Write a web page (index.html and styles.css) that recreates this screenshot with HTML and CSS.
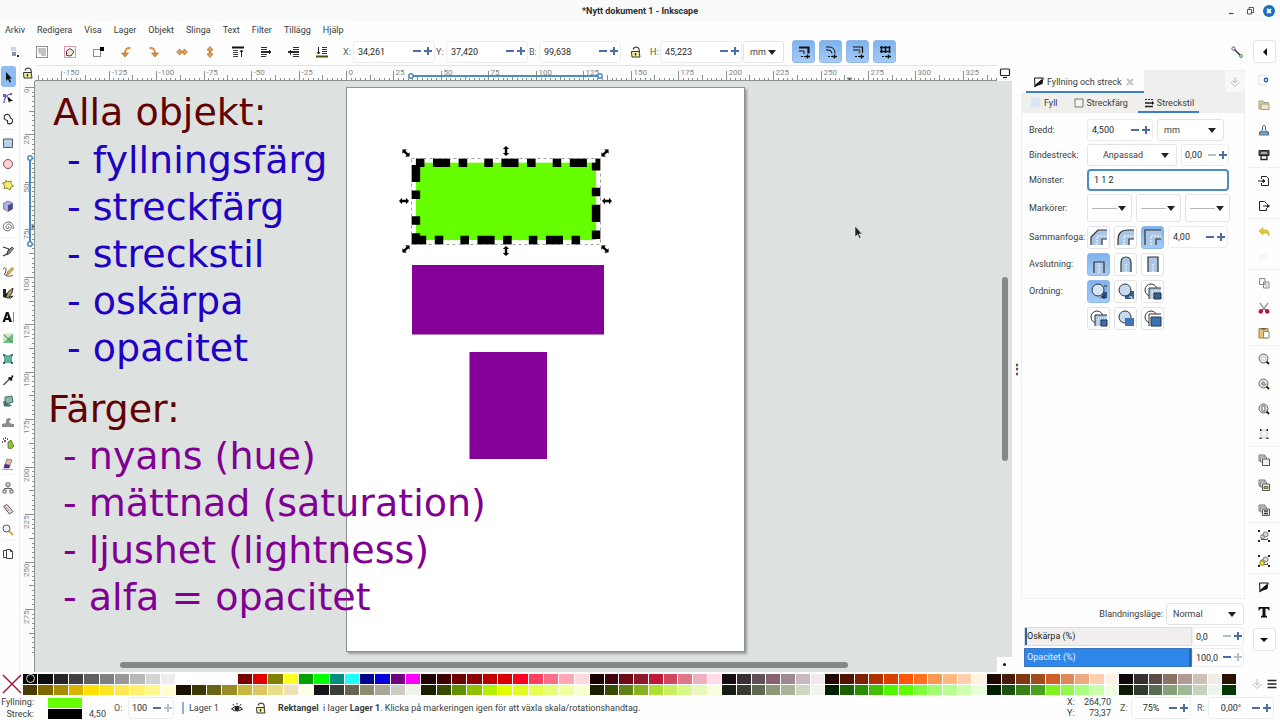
FILE: index.html
```html
<!DOCTYPE html>
<html lang="sv">
<head>
<meta charset="utf-8">
<title>*Nytt dokument 1 - Inkscape</title>
<link rel="stylesheet" href="styles.css">
</head>
<body>
<svg class="defs" aria-hidden="true">
  <defs>
    <symbol id="lock" viewBox="0 0 12 12"><path d="M3 3.500C4 .5 8 .5 9 3L9.500 6" fill="none" stroke="#444" stroke-width="1.200"/><path d="M1.500 5.500h7.500l1 5.500H2z" fill="#faf6a0" stroke="#333"/><path d="M5.500 7v2.500" stroke="#222" stroke-width="1.500"/></symbol>
    <symbol id="pen" viewBox="0 0 12 12"><path d="M1.500 2h9L2 10.500z" fill="#fff" stroke="#111"/><path d="M1 11.500l1.500-3L10.500 2 9.500 8 5 9.500z" fill="#111"/><path d="M9 3.500l2.500-2v2.500z" fill="#d8c840"/></symbol>
    <symbol id="dock" viewBox="0 0 12 12"><path d="M6 1v6M3.500 4.500L6 7l2.500-2.500M1.500 6L6 10.500 10.500 6" fill="none" stroke="#b8b8b8"/></symbol>
    <symbol id="pages" viewBox="0 0 12 12"><path d="M1.500 2.500h5v7h-5z" fill="#fff" stroke="#444"/><path d="M4.500 1.500h4l2 2v7h-6z" fill="#fff" stroke="#444"/><path d="M8.500 1.500v2h2" fill="none" stroke="#444"/></symbol>
    <symbol id="lens" viewBox="0 0 12 12"><circle cx="5.500" cy="5.500" r="4.500" fill="#e4e6e6" stroke="#666"/><path d="M8.500 8.500l2.500 2.500" stroke="#222" stroke-width="2"/></symbol>
    <symbol id="clones" viewBox="0 0 12 12"><path d="M1 1h6v6H1z" fill="#ddd" stroke="#777"/><path d="M2.500 3h6v5h-6z" fill="#ddd" stroke="#888"/><path d="M4.500 5h7v6.500h-7z" fill="#eee" stroke="#555"/></symbol>
    <symbol id="group" viewBox="0 0 12 12"><circle cx="7.500" cy="4.500" r="2.500" fill="#ddd" stroke="#777"/><path d="M3 5h3v4H3z" fill="#ddd" stroke="#777"/><path d="M0 0h2v2H0zM10 0h2v2h-2zM0 10h2v2H0zM10 10h2v2h-2z" fill="#222"/><path d="M3 9.500h6.500V8" fill="none" stroke="#555"/></symbol>
    <symbol id="arr" viewBox="-6 -6 12 12"><path d="M-5 0L-2-3.200v2H2v-2L5 0 2 3.200V1.200H-2v2z"/></symbol>
  </defs>
</svg>

<header class="titlebar">
  <h1>*Nytt dokument 1 - Inkscape</h1>
  <div class="window-buttons">
    <button aria-label="Minimera"><svg viewBox="0 0 12 12"><path d="M4 8.500h4.500" stroke="#444" stroke-width="1.200"/></svg></button>
    <button aria-label="Återställ"><svg viewBox="0 0 12 12"><path d="M3.500 4.500h4v4.500h-4zM5 4.500v-2h4.500V7.500H7.500" fill="none" stroke="#555"/></svg></button>
    <button aria-label="Stäng"><svg viewBox="0 0 12 12"><circle cx="6" cy="6" r="6" fill="#1b6fba"/><path d="M4 4l4 4M8 4L4 8" stroke="#fff" stroke-width="1.800"/></svg></button>
  </div>
</header>

<nav class="menubar">
  <button>Arkiv</button><button>Redigera</button><button>Visa</button><button>Lager</button><button>Objekt</button><button>Slinga</button><button>Text</button><button>Filter</button><button>Tillägg</button><button>Hjälp</button>
</nav>

<div class="toolbar">
  <div class="tool-icons">
    <button aria-label="Markera allt"><svg viewBox="0 0 12 12"><path d="M3 1h5v4H3z" fill="#ccd6e6"/><path d="M4 6h4v4H4z" fill="#8794aa"/><path d="M9 9h2v2H9z" fill="#333"/></svg></button>
    <button aria-label="Markera i alla lager"><svg viewBox="0 0 12 12"><path d="M.5.5h11v11H.5z" fill="none" stroke="#222" stroke-dasharray="1 1"/><path d="M2 3h8M2 5h8M3 7h7M5 9h5" stroke="#888" stroke-width="1.200"/></svg></button>
    <button aria-label="Avmarkera"><svg viewBox="0 0 12 12"><path d="M.5.5h11v11H.5z" fill="none" stroke="#c03060" stroke-dasharray="1 1"/><path d="M2.500 9.500V5L6 2.500l4 3-3 4.500z" fill="#eee6c4" stroke="#444"/></svg></button>
    <button aria-label="Rutmarkering"><svg viewBox="0 0 12 12"><path d="M1.500 3.500h7v7h-7z" fill="none" stroke="#222" stroke-dasharray="1 1"/><path d="M8 1h4v4H8z"/></svg></button>
    <button aria-label="Rotera moturs"><svg viewBox="0 0 12 12"><path d="M10.500 2C7 1.500 5 3.500 5 7" fill="none" stroke="#e09040" stroke-width="2"/><path d="M1.500 7h7L5 11z" fill="#e09040" stroke="#a86420" stroke-width=".6"/></svg></button>
    <button aria-label="Rotera medurs"><svg viewBox="0 0 12 12"><path d="M1.500 2C5 1.500 7 3.500 7 7" fill="none" stroke="#e09040" stroke-width="2"/><path d="M3.500 7h7L7 11z" fill="#e09040" stroke="#a86420" stroke-width=".6"/></svg></button>
    <button aria-label="Vänd vågrätt"><svg viewBox="0 0 12 12"><path d="M.5 6L4 3v2h4V3l3.500 3L8 9V7H4v2z" fill="#eba457" stroke="#a86420" stroke-width=".7"/></svg></button>
    <button aria-label="Vänd lodrätt"><svg viewBox="0 0 12 12"><path d="M6 .5L9 4H7v4h2l-3 3.500L3 8h2V4H3z" fill="#eba457" stroke="#a86420" stroke-width=".7"/></svg></button>
    <button aria-label="Höj överst"><svg viewBox="0 0 12 12"><path d="M0 1.500h12" stroke="#111" stroke-width="2"/><path d="M1 4.500h5M1 6.500h5M1 8.500h5M1 10.500h5" stroke="#444"/><path d="M9.500 11V4M8 6l1.500-2L11 6" fill="none" stroke="#222"/></svg></button>
    <button aria-label="Höj"><svg viewBox="0 0 12 12"><path d="M1 1.500h6M1 3.500h6M1 8.500h6M1 10.500h5" stroke="#333" stroke-width="1.200"/><path d="M1 6h10" stroke="#111" stroke-width="1.800"/><path d="M9.500 8V4" stroke="#222"/></svg></button>
    <button aria-label="Sänk"><svg viewBox="0 0 12 12"><path d="M5 1.500h6M5 3.500h6M5 8.500h6M5 10.500h6" stroke="#333" stroke-width="1.200"/><path d="M0 6h11" stroke="#111" stroke-width="1.800"/><path d="M2.500 4v5" stroke="#222"/></svg></button>
    <button aria-label="Sänk nederst"><svg viewBox="0 0 12 12"><path d="M0 10.500h12" stroke="#554c10" stroke-width="2"/><path d="M6 1.500h5M6 3.500h5M6 5.500h5M6 7.500h5" stroke="#333"/><path d="M2.500 1v7M1 6l1.500 2L4 6" fill="none" stroke="#222"/></svg></button>
  </div>
  <div class="field"><label for="fx">X:</label><div class="spin"><input id="fx" value="34,261"><button class="minus" aria-label="Minska"></button><button class="plus" aria-label="Öka"></button></div></div>
  <div class="field"><label for="fy">Y:</label><div class="spin"><input id="fy" value="37,420"><button class="minus" aria-label="Minska"></button><button class="plus" aria-label="Öka"></button></div></div>
  <div class="field"><label for="fw">B:</label><div class="spin"><input id="fw" value="99,638"><button class="minus" aria-label="Minska"></button><button class="plus" aria-label="Öka"></button></div></div>
  <button class="ratio" aria-label="Lås proportioner"><svg viewBox="0 0 12 12"><use href="#lock"/></svg></button>
  <div class="field"><label for="fh">H:</label><div class="spin"><input id="fh" value="45,223"><button class="minus" aria-label="Minska"></button><button class="plus" aria-label="Öka"></button></div></div>
  <div class="drop unit"><select aria-label="Enhet"><option>mm</option></select></div>
  <div class="toggles">
    <button class="tile on" aria-label="Skala streck"><svg viewBox="0 0 14 14"><path d="M2 2.500h9.500v6" fill="none" stroke="#111" stroke-width="2.200"/><path d="M2 6h5v3" fill="none" stroke="#111"/><path d="M4 11.500h4" stroke="#111" stroke-dasharray="2 1"/><path d="M8 11.500h5M10.500 9.500v4" stroke="#111" stroke-width="1.300"/></svg></button>
    <button class="tile on" aria-label="Skala hörnradie"><svg viewBox="0 0 14 14"><path d="M2 2h3q6 0 6 6.500M2 5h2q4 0 4 3.500" fill="none" stroke="#111"/><path d="M4 11.500h4" stroke="#111" stroke-dasharray="2 1"/><path d="M8 11.500h5M10.500 9.500v4" stroke="#111" stroke-width="1.300"/></svg></button>
    <button class="tile on" aria-label="Flytta toningar"><svg viewBox="0 0 14 14"><path d="M2 2h9.500v6" fill="none" stroke="#111" stroke-width="1.200"/><path d="M2 5h6.500v3.500" fill="none" stroke="#567" stroke-width="1.800"/><path d="M4 11.500h4" stroke="#111" stroke-dasharray="2 1"/><path d="M8 11.500h5M10.500 9.500v4" stroke="#111" stroke-width="1.300"/></svg></button>
    <button class="tile on" aria-label="Flytta mönster"><svg viewBox="0 0 14 14"><path d="M2 2.500h10.500M2 6.500h10.500M3.500 1v7M7.500 1v7M11.500 1v7" stroke="#111" stroke-width="1.500"/><path d="M4 11.500h4" stroke="#111" stroke-dasharray="2 1"/><path d="M8 11.500h5M10.500 9.500v4" stroke="#111" stroke-width="1.300"/></svg></button>
  </div>
  <div class="snap">
    <button class="plain" aria-label="Fästning"><svg viewBox="0 0 12 12"><path d="M3 3l7 7" stroke="#333" stroke-width="1.500"/><circle cx="2.500" cy="2.500" r="1.600" fill="#fff" stroke="#6040b0"/><circle cx="10" cy="10" r="1.400" fill="#fff" stroke="#309040"/></svg></button>
    <button class="tile" aria-label="Visa fästalternativ"><svg viewBox="0 0 14 14"><path d="M9 3v8L5 7z" fill="#111"/></svg></button>
  </div>
</div>

<main class="work">
  <div class="toolbox">
    <button class="on" aria-label="Markeringsverktyg"><svg viewBox="0 0 12 12"><path d="M4 1v9l2-2 1.500 3.500L9 11 7.500 7.500H10z" fill="#111"/></svg></button>
    <button aria-label="Nodverktyg"><svg viewBox="0 0 12 12"><path d="M2 11Q2 3 9 2" fill="none" stroke="#5040b0" stroke-width="1.200"/><path d="M1 2h3v3H1zM8 1h2v2H8z" fill="#6a5ac8"/><path d="M5 4l6 5-3 .3L7 11z" fill="#111"/></svg></button>
    <button aria-label="Formbyggare"><svg viewBox="0 0 12 12"><path d="M3 6.500a3 3 0 1 1 5-3l.5 1.500a3 3 0 1 1-3 5V7.500z" fill="#fff" stroke="#333" stroke-width="1.100"/></svg></button>
    <hr>
    <button aria-label="Rektangel"><svg viewBox="0 0 12 12"><path d="M1.500 2h9v8.500h-9z" fill="#b9cfe6" stroke="#556"/></svg></button>
    <button aria-label="Ellips"><svg viewBox="0 0 12 12"><circle cx="6" cy="6" r="4.500" fill="#f8d0d8" stroke="#a04858"/></svg></button>
    <button aria-label="Stjärna"><svg viewBox="0 0 12 12"><path d="M4 1l1.500 2L9 2v2.500L11.500 7 9 8l-1 3-3-2-3 .5.500-3L.5 4l3-.5z" fill="#f2ee70" stroke="#8a8630"/></svg></button>
    <button aria-label="3D-låda"><svg viewBox="0 0 12 12"><path d="M1.500 3L6 1l4.500 2v6L6 11.500 1.500 9z" fill="#b0b0e0" stroke="#556" stroke-width=".6"/><path d="M6 5.500v6L10.500 9V3z" fill="#4a4a90"/></svg></button>
    <button aria-label="Spiral"><svg viewBox="0 0 12 12"><path d="M6 6c1-1 2 1 0 1.500S3 5 5.500 3.500 10 5 9 7.500 4 11 2 8 2.500 1 6.500 1 12 5 11 8" fill="none" stroke="#666"/></svg></button>
    <hr>
    <button aria-label="Penna"><svg viewBox="0 0 12 12"><path d="M1 2l6 2-2 5-4 2" fill="none" stroke="#333" stroke-width="1.200"/><path d="M5 10l1-4 4-4 1.500 1.500L8 8z" fill="#7a9a80" stroke="#333" stroke-width=".8"/></svg></button>
    <button aria-label="Blyerts"><svg viewBox="0 0 12 12"><path d="M1 3q3-3 3 1T2 8q4 4 9 1" fill="none" stroke="#555"/><path d="M4.500 9.500l1-3.500L10 1.500l1.500 1.500L7 8z" fill="#f0bc48" stroke="#765a20" stroke-width=".7"/></svg></button>
    <button aria-label="Kalligrafi"><svg viewBox="0 0 12 12"><path d="M1 2h3v4l2 1-2 4-3-1z" fill="#222"/><path d="M4 10l2-5 5-4-1 5-3 4 4-1-2 2H5z" fill="#b8a060" stroke="#111" stroke-width=".8"/></svg></button>
    <hr>
    <button aria-label="Text"><svg viewBox="0 0 12 12"><path d="M.5 11L4 1h2.500L10 11H7.200L6.600 9H3.500L3 11zM4.200 7h1.900L5.200 3.500z" fill="#111" fill-rule="evenodd"/><path d="M11.500 1v10" stroke="#888"/></svg></button>
    <button aria-label="Toning"><svg viewBox="0 0 12 12"><path d="M1 1.500h10v9.500H1z" fill="#c4ecc8"/><path d="M6 6l5-4.500V11H1z" fill="#72bd80"/><path d="M2 3l8 7" stroke="#4c7054"/></svg></button>
    <button aria-label="Nät"><svg viewBox="0 0 12 12"><path d="M2 2q4 2 8 0-2 4 0 8-4-2-8 0 2-4 0-8z" fill="#62b49c" stroke="#488"/><path d="M1 1h2v2H1zM9 1h2v2H9zM1 9h2v2H1zM9 9h2v2H9z" fill="#466"/></svg></button>
    <button aria-label="Pipett"><svg viewBox="0 0 12 12"><path d="M1.500 11l6-6" stroke="#555" stroke-width="1.500"/><path d="M6 4l1-1 2 .5L10 1l1.500 1L10 5l.5 1-1.500 1z" fill="#111"/></svg></button>
    <button aria-label="Färghink"><svg viewBox="0 0 12 12"><path d="M3 2l7-1 1 6-5 2-3-3z" fill="#8fb4ac" stroke="#355" stroke-width=".8"/><path d="M1 6q3 0 4 3l5 1-2 1.500H2z" fill="#3f6f62"/></svg></button>
    <button aria-label="Justera"><svg viewBox="0 0 12 12"><path d="M0 11V8l4-1q-1-5 4-5l1 2-2 1q0 3 5 3v3z" fill="#8a8c8c"/></svg></button>
    <button aria-label="Sprej"><svg viewBox="0 0 12 12"><path d="M6 5l3-2 3 6-3 3-3-1z" fill="#8ec040" stroke="#4a6a20" stroke-width=".7"/><path d="M1 2h1M3 1h1M2 4h2M5 2h1M0 5h1" stroke="#333" stroke-width="1.500"/></svg></button>
    <button aria-label="Suddgummi"><svg viewBox="0 0 12 12"><path d="M5 1l5 1-3 8H2z" fill="#e8b8a4" stroke="#666" stroke-width=".7"/><path d="M3 6l5 1-1 3H1.500z" fill="#4434a0"/><path d="M0 11.500h11" stroke="#aaa"/></svg></button>
    <hr>
    <button aria-label="Koppling"><svg viewBox="0 0 12 12"><path d="M4 1h4v3H4zM1 8h3v3H1zM8 8h3v3H8zM6 4v2.500M2.500 8V6.500h7V8" fill="#eee" stroke="#666"/></svg></button>
    <button aria-label="Mät"><svg viewBox="0 0 12 12"><path d="M1.500 3.500L5 1.500l6 7-3.500 2.500z" fill="#f2dcd8" stroke="#555"/><path d="M4 4l3.500 4" stroke="#b88"/></svg></button>
    <button aria-label="Zoom"><svg viewBox="0 0 12 12"><path d="M7 7l4 4" stroke="#d8b030" stroke-width="2.200"/><circle cx="4.500" cy="4.500" r="3.500" fill="#f0f4f4" stroke="#555"/></svg></button>
    <hr>
    <button aria-label="Sidor"><svg viewBox="0 0 12 12"><use href="#pages"/></svg></button>
  </div>

  <section class="editor" aria-label="Rityta">
    <button class="guide-lock" aria-label="Lås stödlinjer"><svg viewBox="0 0 12 12"><use href="#lock"/></svg></button>
    <svg class="ruler-x" id="ruler-x"></svg>
    <button class="screen" aria-label="Färghanterad vy"><svg viewBox="0 0 12 12"><rect x="1.500" y="2" width="9" height="6.500" rx="1" fill="#fff" stroke="#222" stroke-width="1.200"/><path d="M4 10.500h4" stroke="#222" stroke-width="1.200"/></svg></button>
    <svg class="ruler-y" id="ruler-y"></svg>
    <svg class="canvas">
      <g transform="translate(-35 -81)">
        <rect class="shadow" x="348" y="89" width="399" height="565"/>
        <rect class="page" x="346.500" y="87.500" width="398" height="564"/>
        <rect x="412" y="265" width="192" height="69.500" fill="#840096"/>
        <rect x="469.500" y="352" width="77.500" height="107" fill="#840096"/>
        <rect class="selected" x="415.900" y="162.700" width="180.200" height="77.400"/>
        <rect class="bbox" x="411.500" y="158.500" width="189" height="86"/>
        <g class="handles">
          <use href="#arr" width="12" height="12" transform="translate(406 153) rotate(45) translate(-6 -6)"/>
          <use href="#arr" width="12" height="12" transform="translate(605 153) rotate(-45) translate(-6 -6)"/>
          <use href="#arr" width="12" height="12" transform="translate(406 249) rotate(-45) translate(-6 -6)"/>
          <use href="#arr" width="12" height="12" transform="translate(605 249) rotate(45) translate(-6 -6)"/>
          <use href="#arr" width="12" height="12" transform="translate(506 151) rotate(90) translate(-6 -6)"/>
          <use href="#arr" width="12" height="12" transform="translate(506 251) rotate(90) translate(-6 -6)"/>
          <use href="#arr" width="12" height="12" transform="translate(404 201) translate(-6 -6)"/>
          <use href="#arr" width="12" height="12" transform="translate(607 201) translate(-6 -6)"/>
        </g>
        <g class="note head"><text x="53" y="125">Alla objekt:</text><text x="48" y="422">Färger:</text></g>
        <g class="note blue">
          <text x="67" y="173">- fyllningsfärg</text><text x="67" y="220">- streckfärg</text><text x="67" y="267">- streckstil</text><text x="67" y="314">- oskärpa</text><text x="67" y="361">- opacitet</text>
        </g>
        <g class="note violet">
          <text x="63" y="469">- nyans (hue)</text><text x="63" y="516">- mättnad (saturation)</text><text x="63" y="563">- ljushet (lightness)</text><text x="63" y="610">- alfa = opacitet</text>
        </g>
        <path d="M855 226v11l2.500-2.500 2 4 1.500-1-2-3.500h3.200z" fill="#222" stroke="#eee" stroke-width=".6"/>
      </g>
    </svg>
    <div class="scroll-y"><i></i></div>
    <div class="scroll-x"><i></i></div>
    <div class="corner"></div>
  </section>

  <div class="grip" aria-hidden="true">⋮</div>

  <aside class="dock">
    <div class="dock-tabs">
      <div class="dock-tab"><svg viewBox="0 0 12 12"><use href="#pen"/></svg><span>Fyllning och streck</span><button aria-label="Stäng flik"><svg viewBox="0 0 12 12"><path d="M3 3l6 6M9 3L3 9" stroke="#c4c4c4" stroke-width="2"/></svg></button></div>
      <button class="dock-menu" aria-label="Dockmeny"><svg viewBox="0 0 12 12"><use href="#dock"/></svg></button>
    </div>
    <div class="sub-tabs">
      <button><svg viewBox="0 0 12 12"><path d="M1 1h9v9H1z" fill="#dbe6f4"/></svg>Fyll</button>
      <button><svg viewBox="0 0 12 12"><path d="M2 2h8v8H2z" fill="#f4f4f4" stroke="#777"/></svg>Streckfärg</button>
      <button class="active"><svg viewBox="0 0 12 12"><path d="M2 2.500h8" stroke="#222" stroke-dasharray="2 1"/><path d="M2 6h8M2 9.500h8" stroke="#222" stroke-width="1.300"/><path d="M9 4l2 2-2 2z"/></svg>Streckstil</button>
    </div>
    <form class="style-form">
      <div class="row"><label for="bredd">Bredd:</label><div class="spin w66"><input id="bredd" value="4,500"><button type="button" class="minus" aria-label="Minska"></button><button type="button" class="plus" aria-label="Öka"></button></div><div class="drop w67"><select aria-label="Breddenhet"><option>mm</option></select></div></div>
      <div class="row"><label for="dash">Bindestreck:</label><div class="drop w90 mid"><select id="dash"><option>Anpassad</option></select></div><div class="spin w48 tight"><input aria-label="Förskjutning" value="0,00"><button type="button" class="minus off" aria-label="Minska"></button><button type="button" class="plus" aria-label="Öka"></button></div></div>
      <div class="row"><label for="monster">Mönster:</label><input class="pattern" id="monster" value="1 1 2"></div>
      <div class="row markers"><span>Markörer:</span><div class="drop line"><select aria-label="Startmarkör"><option></option></select></div><div class="drop line"><select aria-label="Mittmarkör"><option></option></select></div><div class="drop line"><select aria-label="Slutmarkör"><option></option></select></div></div>
      <div class="row tiles"><span>Sammanfoga:</span>
        <button type="button" class="tile" aria-label="Fasad"><svg viewBox="0 0 18 18"><path d="M1 17V9l7-7h9v9h-5v6z" fill="#a9c6e4"/><path d="M1 17V9l7-7h9M17 11h-5v6" fill="none" stroke="#333" stroke-width="1.200"/><path d="M7 17V8h10" fill="none" stroke="#fff" stroke-dasharray="2 1"/></svg></button>
        <button type="button" class="tile" aria-label="Rund"><svg viewBox="0 0 18 18"><path d="M1 17v-5Q1 2 11 2h6v9h-5v6z" fill="#a9c6e4"/><path d="M1 17v-5Q1 2 11 2h6M17 11h-5v6" fill="none" stroke="#333" stroke-width="1.200"/><path d="M7 17V8h10" fill="none" stroke="#fff" stroke-dasharray="2 1"/></svg></button>
        <button type="button" class="tile on" aria-label="Spetsig"><svg viewBox="0 0 18 18"><path d="M1 17V2h16v9h-5v6z" fill="#a9c6e4"/><path d="M1 17V2h16M17 11h-5v6" fill="none" stroke="#333" stroke-width="1.200"/><path d="M7 17V8h10" fill="none" stroke="#fff" stroke-dasharray="2 1"/></svg></button>
        <div class="spin w60"><input aria-label="Spetsgräns" value="4,00"><button type="button" class="minus" aria-label="Minska"></button><button type="button" class="plus" aria-label="Öka"></button></div></div>
      <div class="row tiles"><span>Avslutning:</span>
        <button type="button" class="tile on" aria-label="Trubbig"><svg viewBox="0 0 18 18"><path d="M4 18V7h10v11" fill="#a9c6e4" stroke="#333" stroke-width="1.200"/><path d="M9 18V8" stroke="#fff" stroke-dasharray="2 1"/></svg></button>
        <button type="button" class="tile" aria-label="Rundad"><svg viewBox="0 0 18 18"><path d="M4 17V8q0-6 5-6t5 6v9" fill="#a9c6e4" stroke="#333" stroke-width="1.200"/><path d="M9 17V8" stroke="#fff" stroke-dasharray="2 1"/></svg></button>
        <button type="button" class="tile" aria-label="Fyrkantig"><svg viewBox="0 0 18 18"><path d="M4 17V2h10v15" fill="#a9c6e4" stroke="#333" stroke-width="1.200"/><path d="M9 17V8" stroke="#fff" stroke-dasharray="2 1"/></svg></button></div>
      <div class="row tiles"><span>Ordning:</span>
        <button type="button" class="tile on" aria-label="Ordning 1"><svg viewBox="0 0 18 18"><path d="M12 5h5v12H9v-3" fill="#88b0da"/><path d="M12 10h5v6h-5z" fill="#27507e"/><circle cx="8" cy="8" r="6" fill="#d5e5f6" stroke="#333"/><path d="M11 15h3v2M14 4h3" stroke="#222" fill="none"/></svg></button>
        <button type="button" class="tile" aria-label="Ordning 2"><svg viewBox="0 0 18 18"><path d="M8 9h9v8H8z" fill="#33618f"/><circle cx="8" cy="8" r="6" fill="#c5daf0" stroke="#333"/><path d="M12 15h3v2" stroke="#fff" fill="none"/></svg></button>
        <button type="button" class="tile" aria-label="Ordning 3"><svg viewBox="0 0 18 18"><circle cx="7" cy="8" r="6" fill="#fff" stroke="#333"/><path d="M5 17V6h12v11z" fill="#a9c6e4"/><path d="M5 17V6h12" fill="none" stroke="#333"/><path d="M10 11h7v6h-7z" fill="#33618f" stroke="#234"/><path d="M8 17V9h9" fill="none" stroke="#fff" stroke-dasharray="1 1"/></svg></button></div>
      <div class="row tiles"><span></span>
        <button type="button" class="tile" aria-label="Ordning 4"><svg viewBox="0 0 18 18"><circle cx="7" cy="8" r="6" fill="#fff" stroke="#333"/><path d="M5 17V6h12v11z" fill="#a9c6e4"/><path d="M5 17V6h12" fill="none" stroke="#333"/><path d="M11 11h6v6h-6z" fill="#3a6fac" stroke="#234"/><path d="M8 17V9h9" fill="none" stroke="#fff" stroke-dasharray="1 1"/></svg></button>
        <button type="button" class="tile" aria-label="Ordning 5"><svg viewBox="0 0 18 18"><circle cx="8" cy="8" r="6" fill="#c5daf0" stroke="#333"/><path d="M8 9h9v8H8z" fill="#3f74b4"/></svg></button>
        <button type="button" class="tile" aria-label="Ordning 6"><svg viewBox="0 0 18 18"><circle cx="7" cy="8" r="6" fill="#fff" stroke="#333"/><path d="M5 17V5h12" fill="#fff" stroke="#333"/><path d="M7 8h10v9H7z" fill="#3f74b4" stroke="#234"/></svg></button></div>
    </form>
    <div class="dock-foot">
      <div class="blend"><label for="blend">Blandningsläge:</label><div class="drop w78"><select id="blend"><option>Normal</option></select></div></div>
      <div class="scale"><div class="bar"><label for="blur">Oskärpa (%)</label><input id="blur" type="range" min="0" max="100" value="0"></div><div class="spin tight"><input aria-label="Oskärpa, värde" value="0,0"><button class="minus off" aria-label="Minska"></button><button class="plus" aria-label="Öka"></button></div></div>
      <div class="scale full"><div class="bar"><label for="opac">Opacitet (%)</label><input id="opac" type="range" min="0" max="100" value="100"></div><div class="spin tight"><input aria-label="Opacitet, värde" value="100,0"><button class="minus" aria-label="Minska"></button><button class="plus off" aria-label="Öka"></button></div></div>
    </div>
  </aside>

  <div class="commands">
    <button aria-label="Nytt"><svg viewBox="0 0 12 12"><path d="M1 1h7v10H1z" fill="#fafafa" stroke="#e4e4e4"/><circle cx="8" cy="6" r="1.700" fill="#fff" stroke="#2a62a8" stroke-width="1.400"/></svg></button>
    <button aria-label="Öppna"><svg viewBox="0 0 12 12"><path d="M1 2h4l1 1.500h4.500V10H1z" fill="#d9cfae" stroke="#a89e80"/><path d="M3 5h8v5.500H3z" fill="#eee6cc" stroke="#a89e80"/></svg></button>
    <button aria-label="Spara"><svg viewBox="0 0 12 12"><path d="M4.500 6V2.500L6 1l1.500 1.500V6l2 2h-7z" fill="#e6eef8" stroke="#4a76b0"/><path d="M1.500 8h9v3h-9z" fill="#8aaad4" stroke="#567"/></svg></button>
    <button aria-label="Skriv ut"><svg viewBox="0 0 12 12"><path d="M1 1.500h10v5H1z" fill="#555" stroke="#222"/><path d="M3 4h6" stroke="#fff"/><path d="M3 6.500h6v4H3z" fill="#fff" stroke="#222" stroke-width="1.300"/></svg></button>
    <hr>
    <button aria-label="Importera"><svg viewBox="0 0 12 12"><path d="M3.500 4V1.500h5l2 2v7h-7V8" fill="#fff" stroke="#222"/><path d="M0 6h6M5 4.500L7 6 5 7.500z" stroke="#222" fill="#222"/></svg></button>
    <button aria-label="Exportera"><svg viewBox="0 0 12 12"><path d="M8.500 4V3.500l-2-2h-5v9h7V8" fill="#fff" stroke="#222"/><path d="M5 6h5M9.500 4.500l2 1.500-2 1.500z" stroke="#222" fill="#222"/></svg></button>
    <hr>
    <button aria-label="Ångra"><svg viewBox="0 0 12 12"><path d="M1 5l4-3.500V4h3q3.500 0 3 6-1-3-3-3H5v2z" fill="#dcc838" stroke="#b4a030" stroke-width=".5"/></svg></button>
    <button class="dim" aria-label="Gör om"><svg viewBox="0 0 12 12"><path d="M11 5L7 1.500V4H4Q.5 4 1 10q1-3 3-3h3v2z" fill="#f4f4f4" stroke="#ddd" stroke-width=".5"/></svg></button>
    <hr>
    <button aria-label="Kopiera"><svg viewBox="0 0 12 12"><path d="M1.500 1.500h5.500v6H1.500zM5.500 5h5.500v6H5.500z" fill="#fafafa" stroke="#888"/><path d="M7 7h2.500M7 9h2.500" stroke="#aaa"/></svg></button>
    <button aria-label="Klipp ut"><svg viewBox="0 0 12 12"><path d="M2 1l5 7M10 1L5 8" stroke="#999" stroke-width="1.300"/><path d="M1 7.500l4-.5v3l-2 2-2.500-1.500zM11 7.500L7 7v3l2 2 2.500-1.500z" fill="#b8143c"/></svg></button>
    <button aria-label="Klistra in"><svg viewBox="0 0 12 12"><path d="M1 1.500h9V11H1z" fill="#e8c47c" stroke="#a08040"/><path d="M3.500 1h4v2h-4z" fill="#666"/><path d="M5.500 4.500H11V11H5.500z" fill="#fff" stroke="#888"/></svg></button>
    <hr>
    <button aria-label="Zooma markering"><svg viewBox="0 0 12 12"><use href="#lens"/><path d="M3.500 4h4v3h-4z" fill="#fff" stroke="#aaa" stroke-width=".5"/></svg></button>
    <button aria-label="Zooma teckning"><svg viewBox="0 0 12 12"><use href="#lens"/><path d="M3.500 6L5 3.500l3 3-2 1z" fill="#b8cc80" stroke="#555" stroke-width=".7"/></svg></button>
    <button aria-label="Zooma sida"><svg viewBox="0 0 12 12"><use href="#lens"/><path d="M4 3h3v5H4z" fill="#fff" stroke="#444" stroke-width=".8"/></svg></button>
    <button aria-label="Centrera sida"><svg viewBox="0 0 12 12"><path d="M3 2h6v8H3z" fill="#f4f4f4" stroke="#ccc"/><path d="M2 1h1.500v2H2zM8.500 1H10v2H8.500zM1.500 9.500h2V11h-2zM8.500 9.500h2V11h-2z" fill="#333"/></svg></button>
    <hr>
    <button aria-label="Duplicera"><svg viewBox="0 0 12 12"><use href="#clones"/></svg></button>
    <button aria-label="Klona"><svg viewBox="0 0 12 12"><use href="#clones"/><path d="M6 7.500h4v2H6z" fill="#c8a820" stroke="#332" stroke-width=".6"/></svg></button>
    <button aria-label="Avlänka klon"><svg viewBox="0 0 12 12"><use href="#clones"/><path d="M6 7h4M6 9.500h4" stroke="#333" stroke-width="1.300"/></svg></button>
    <hr>
    <button aria-label="Gruppera"><svg viewBox="0 0 12 12"><use href="#group"/></svg></button>
    <button aria-label="Avgruppera"><svg viewBox="0 0 12 12"><use href="#group"/><path d="M2 6h4v4H2z" fill="#f4e048" stroke="#a08c20"/></svg></button>
    <hr>
    <button aria-label="Fyllning och streck"><svg viewBox="0 0 12 12"><use href="#pen"/></svg></button>
    <button aria-label="Text och typsnitt"><svg viewBox="0 0 12 12"><path d="M.5 1h11v3.500h-1Q10.500 2.500 7.500 2.500v7l1.500.5v1.500H3V10l1.500-.5v-7Q1.500 2.500 1.500 4.500h-1z" fill="#111"/></svg></button>
    <button class="tile more" aria-label="Fler kommandon"><svg viewBox="0 0 14 14"><path d="M3 5h8L7 9z" fill="#111"/></svg></button>
  </div>
</main>

<div class="palette">
  <button class="no-color" aria-label="Ingen färg"><svg viewBox="0 0 20 20"><path d="M1 1l18 18M19 1L1 19" stroke="#a01848" stroke-width="1.500"/></svg></button>
  <div class="swatches" id="swatches"></div>
  <div class="palette-menu"><button aria-label="Palettläge"><svg viewBox="0 0 12 12"><use href="#dock"/></svg></button><button aria-label="Palettmeny"><svg viewBox="0 0 12 12"><path d="M1.500 2.500h9M1.500 6h9M1.500 9.500h9" stroke="#222" stroke-width="1.300"/></svg></button></div>
</div>

<footer class="status">
  <div class="paint-labels"><span>Fyllning:</span><span>Streck:</span></div>
  <div class="paint"><i class="fill"></i><i class="stroke"></i></div>
  <span class="stroke-width">4,50</span>
  <div class="field"><label for="so">O:</label><div class="spin w46 tight"><input id="so" value="100"><button class="minus" aria-label="Minska"></button><button class="plus off" aria-label="Öka"></button></div></div>
  <button class="layer">Lager 1</button>
  <button class="plain" aria-label="Visa lager"><svg viewBox="0 0 12 12"><path d="M.5 7Q6 1.500 11.500 7 6 11 .5 7z" fill="#ddd" stroke="#222"/><circle cx="6" cy="6.500" r="2.300" fill="#222"/><path d="M3 3.500L2 2M6 2.500V1M9 3.500L10 2" stroke="#222"/></svg></button>
  <button class="plain" aria-label="Lås lager"><svg viewBox="0 0 12 12"><use href="#lock"/></svg></button>
  <p class="hint"><b>Rektangel</b> &nbsp;i lager <b>Lager 1</b>. Klicka på markeringen igen för att växla skala/rotationshandtag.</p>
  <dl class="coords"><dt>X:</dt><dd>264,70</dd><dt>Y:</dt><dd>73,37</dd></dl>
  <div class="field"><label for="sz">Z:</label><div class="spin w60 center"><input id="sz" value="75%"><button class="minus" aria-label="Minska"></button><button class="plus" aria-label="Öka"></button></div></div>
  <div class="field"><label for="sr">R:</label><div class="spin w66 center"><input id="sr" value="0,00°"><button class="minus" aria-label="Minska"></button><button class="plus" aria-label="Öka"></button></div></div>
</footer>
<script src="script.js"></script>
</body>
</html>
```
FILE: styles.css
```css
* { box-sizing: border-box; }
html, body { height: 100%; }
body {
  margin: 0;
  display: grid;
  grid-template-rows: 22px 16px 27px minmax(0, 1fr) 24px 24px;
  grid-template-columns: minmax(0, 1fr);
  background: #fdfefd;
  color: #3a3d3e;
  font: 9px/12px Roboto, "Open Sans", sans-serif;
  overflow: hidden;
}
button, input, select { font: inherit; color: inherit; }
button { border: 0; padding: 0; background: none; display: flex; align-items: center; justify-content: center; }
input, select { border: 0; background: none; padding: 0; min-width: 0; outline: 0; }
svg { display: block; flex: none; }
button svg { width: 12px; height: 12px; }
.defs { position: absolute; width: 0; height: 0; }

.titlebar { display: grid; grid-template-columns: 1fr auto 1fr; align-items: center; background: #f8fbfa; }
.titlebar h1 { grid-column: 2; margin: 0; font-size: 9px; font-weight: 700; color: #2c2f30; }
.window-buttons { display: flex; justify-content: flex-end; gap: 7px; padding-right: 5px; }

.menubar { display: flex; align-items: center; gap: 12px; padding-left: 5px; }

.toolbar { display: flex; align-items: center; padding-right: 4px; }
.tool-icons { display: flex; padding-right: 7px; }
.tool-icons button { width: 28px; height: 22px; }
.field { display: flex; align-items: center; gap: 3px; color: #555; }
.toolbar .field { width: 93px; gap: 1px; }
.toolbar .field .spin { width: 82px; }
.toolbar .field label { width: 9px; white-space: nowrap; }
.ratio { width: 28px; }
.unit { width: 41px; }
.toggles { display: flex; gap: 4px; margin-left: 8px; }
.snap { display: flex; gap: 10px; margin-left: auto; }

.spin {
  display: flex; align-items: center; gap: 2px;
  height: 22px; padding: 0 2px 0 4px;
  border: 1px solid #eceeee; border-radius: 3px; background: #fff; color: #26292a;
}
.spin input { flex: 1; width: 10px; }
.spin.center input { text-align: center; }
.spin button { width: 9px; height: 15px; position: relative; flex: none; }
.minus::before, .plus::before, .plus::after { content: ""; position: absolute; background: #4c6ea2; }
.minus::before, .plus::before { left: 1px; top: 6px; width: 8px; height: 2px; }
.plus::after { left: 4px; top: 3px; width: 2px; height: 8px; }
.off::before, .off::after { background: #b4c0cc; }
.spin.tight { padding: 0 1px 0 3px; }

.drop { position: relative; height: 22px; border: 1px solid #e2e4e4; border-radius: 3px; background: #fff; }
.drop select { appearance: none; width: 100%; height: 100%; padding: 0 6px; }
.drop::after {
  content: ""; position: absolute; right: 7px; top: 50%; margin-top: -2px;
  border: 4px solid transparent; border-top: 5px solid #222; border-bottom: 0; pointer-events: none;
}
.mid select { padding-left: 15px; }
.tile { width: 23px; height: 23px; border: 1px solid #e2e4e4; border-radius: 3px; background: #fff; flex: none; }
.tile svg { width: 14px; height: 14px; }
.tile.on { background: linear-gradient(#7fb2ee, #a4cbf8); border-color: #8fb8ea; }
.w46 { width: 46px; } .w48 { width: 48px; } .w60 { width: 60px; } .w66 { width: 66px; }
.w67 { width: 67px; } .w78 { width: 78px; } .w90 { width: 90px; }

.work { display: grid; grid-template-columns: 20px minmax(0, 1fr) 9px 224px 35px; min-height: 0; }
.toolbox { display: flex; flex-direction: column; align-items: center; padding: 1px 3px 0 0; border-right: 1px solid #edf0f0; }
.toolbox button { width: 15px; height: 21px; flex: none; }
.toolbox .on { background: #8fbdf2; border-radius: 3px; }
.toolbox hr, .commands hr { width: 100%; margin: 0; border: 0; flex: none; }
.toolbox hr { height: 3px; border-top: 1px solid #f4f6f6; }

.editor { display: grid; grid-template-columns: 15px minmax(0, 1fr) 15px; grid-template-rows: 16px minmax(0, 1fr) 15px; background: #dde1e0; min-height: 0; }
.guide-lock, .ruler-x, .screen, .ruler-y { background: #fbfcfb; }
.ruler-x, .ruler-y, .canvas { width: 100%; height: 100%; overflow: hidden; }
.ruler-y { grid-row: 2 / 4; }
.ruler-x { border-top: 1px solid #e2e4e4; }
.ruler text { font-size: 8px; fill: #85888a; }
.ruler path { stroke: #8c9090; fill: none; }
.ruler .extent { stroke: #4a8cc4; stroke-width: 2; }
.ruler circle { fill: #fff; stroke: #4a8cc4; stroke-width: 1.500; }
.shadow { fill: #000; opacity: .3; filter: blur(1px); }
.page { fill: #fff; stroke: #8c9090; }
.selected { fill: #6f0; stroke: #000; stroke-width: 8.550; stroke-dasharray: 8.550 8.550 17.100 8.550 8.550 17.100; }
.bbox { fill: none; stroke: #a0a0a0; stroke-dasharray: 3 3; }
.handles { fill: #000; }
.note { font: 38px "DejaVu Sans", sans-serif; }
.head { fill: #600000; } .blue { fill: #2000c4; } .violet { fill: #800094; }
.scroll-y { display: flex; justify-content: center; padding-top: 196px; }
.scroll-y i { width: 6px; height: 184px; border-radius: 3px; background: #858888; }
.scroll-x { grid-column: 2; display: flex; align-items: center; padding-left: 85px; }
.scroll-x i { width: 83%; height: 6px; border-radius: 3px; background: #858888; }
.corner { display: flex; align-items: center; justify-content: center; background: #fdfefd; }
.corner::before { content: ""; width: 3px; height: 3px; border-radius: 50%; background: #111; }
.grip { display: flex; align-items: center; justify-content: center; font: 700 12px "Noto Sans", sans-serif; color: #333; }

.dock { display: flex; flex-direction: column; padding-top: 5px; min-width: 0; }
.dock-tabs { display: flex; height: 23px; background: #eeeeec; }
.dock-tab { display: flex; align-items: center; gap: 2px; padding: 0 8px 0 12px; background: linear-gradient(#3a80c4, #3a80c4) 5px 100% / 100% 2px no-repeat #fdfefd; }
.dock-tab svg { width: 12px; height: 12px; }
.dock-menu { width: 20px; margin: 1px 0 1px auto; background: #f8f8f7; border-radius: 3px; }
.sub-tabs { display: flex; height: 20px; padding-left: 4px; gap: 5px; background: #efefed; }
.sub-tabs button { gap: 2px; padding: 0 5px; }
.sub-tabs .active { border-bottom: 2px solid #3a80c4; padding-top: 2px; }
.style-form { flex: 1; display: flex; flex-direction: column; gap: 3px; padding: 6px 0 0 7px; border: 1px solid #eef0f0; border-top: 0; min-height: 0; }
.row { display: flex; align-items: center; gap: 4px; height: 22px; flex: none; }
.row > label, .row > span:first-child { width: 54px; flex: none; white-space: nowrap; }
.pattern { width: 142px; height: 22px; padding: 0 5px; border: 2px solid #4a8cc8; border-radius: 4px; background: #fff; color: #222; }
.row.markers { height: 28px; }
.line { width: 45px; height: 28px; }
.line::before { content: ""; position: absolute; left: 4px; right: 14px; top: 50%; height: 1px; background: #b8baba; }
.line::after { right: 5px; }
.row.tiles { height: 24px; }
.row.tiles svg { width: 18px; height: 18px; }
.dock-foot { padding: 4px 1px 5px 3px; display: flex; flex-direction: column; gap: 2px; }
.blend { display: flex; align-items: center; justify-content: flex-end; gap: 3px; }
.scale { display: grid; grid-template-columns: minmax(0, 1fr) 52px; height: 19px; }
.scale .bar { position: relative; border: 1px solid #dcdedd; background: #f0efed; }
.scale label { position: absolute; left: 2px; top: 2px; z-index: 1; pointer-events: none; color: #222; }
.scale input[type=range] { appearance: none; width: 100%; height: 100%; margin: 0; display: block; }
.scale input::-webkit-slider-thumb { appearance: none; width: 2px; height: 17px; background: #2f62a4; }
.scale .spin { height: 19px; }
.full .bar { background: #2f86ea; border-color: #3a78c0; }
.full label { color: #e8f2ff; }

.commands { display: flex; flex-direction: column; align-items: center; padding: 2px 0 0 3px; }
.commands button { width: 23px; height: 25px; flex: none; }
.commands hr { height: 1px; background: #eef0f0; }
.commands .dim { opacity: .5; }
.commands .more { height: 23px; margin-top: 4px; }

.palette { display: grid; grid-template-columns: 23px minmax(0, 1fr) 44px; align-items: center; }
.no-color svg { width: 20px; height: 20px; }
.swatches { display: grid; grid-template-columns: repeat(37, 23fr) repeat(44, 22fr); grid-auto-rows: 10px; gap: 1px; }
.swatches button:first-child::after { content: ""; width: 7px; height: 7px; border: 1px solid #ddd; border-radius: 50%; }
.palette-menu { display: flex; gap: 3px; padding-left: 15px; }

.status { display: flex; align-items: center; padding-right: 6px; white-space: nowrap; }
.status .field label { color: #555; width: 11px; }
.status .coords ~ .field label { width: 8px; }
.paint-labels { width: 34px; text-align: right; display: grid; }
.paint { display: grid; gap: 1px; width: 34px; margin-left: 14px; }
.paint i { height: 10px; }
.fill { background: #6f0; } .stroke { background: #000; }
.stroke-width { align-self: flex-end; width: 32px; padding-left: 7px; }
.status .field + .field { margin-left: 6px; }
.layer { margin: 0 6px 0 8px; padding-left: 5px; border-left: 2px solid #8fb0dc; height: 12px; }
.status .plain { width: 24px; }
.hint { flex: 1; margin: 0; padding-left: 5px; min-width: 0; overflow: hidden; }
.coords { display: grid; grid-template-columns: 10px 34px; margin: 0 9px 0 0; line-height: 11px; }
.coords dd { margin: 0; text-align: right; }
```
FILE: script.js
```js
const UNIT = 47.45;      // pixels between two labelled ticks
const STEP = 25;         // millimetres between two labelled ticks
const TICK = { major: 10, half: 6, minor: 3 };

function tickLength(i) {
  if (i % 10 === 0) return TICK.major;
  return i % 5 === 0 ? TICK.half : TICK.minor;
}

function horizontalRuler(svg, origin) {
  const width = svg.getBoundingClientRect().width;
  const first = Math.ceil(-origin * 10 / UNIT);
  const last = Math.floor((width - origin) * 10 / UNIT);
  let d = 'M0 14.5H' + width;
  let labels = '';
  for (let i = first; i <= last; i++) {
    const x = Math.round(origin + i * UNIT / 10) + 0.5;
    d += `M${x} 15V${15 - tickLength(i)}`;
    if (i % 10 === 0 && x < width - 20) labels += `<text x="${x + 2}" y="9">${i / 10 * STEP}</text>`;
  }
  svg.classList.add('ruler');
  svg.innerHTML = `<path d="${d}"/>${labels}<path class="extent" d="M376 10H565"/>` +
    '<circle cx="376" cy="10" r="2.2"/><circle cx="565" cy="10" r="2.2"/>' +
    '<path d="M812 12h5l-2.500 3z" style="fill:#555"/>';
}

function verticalRuler(svg, origin) {
  const height = svg.getBoundingClientRect().height;
  const last = Math.floor((height - 16 - origin) * 10 / UNIT);
  let d = 'M14.5 0V' + height;
  let labels = '';
  for (let i = 0; i <= last; i++) {
    const y = Math.round(origin + i * UNIT / 10) + 0.5;
    d += `M15 ${y}H${15 - tickLength(i)}`;
    if (i % 10 === 0) labels += `<text text-anchor="end" transform="translate(9 ${y + 1}) rotate(-90)">${i / 10 * STEP}</text>`;
  }
  svg.classList.add('ruler');
  svg.innerHTML = `<path d="${d}"/>${labels}<path class="extent" d="M10 77V163"/>` +
    '<circle cx="10" cy="77" r="2.2"/><circle cx="10" cy="163" r="2.2"/>' +
    '<path d="M12 143v5l3-2.500z" style="fill:#555"/>';
}

function drawRulers() {
  horizontalRuler(document.getElementById('ruler-x'), 311);
  verticalRuler(document.getElementById('ruler-y'), 6);
}
drawRulers();
window.addEventListener('resize', drawRulers);

const PALETTE = [
  `000000 0d0d0d 262626 404040 606060 808080 999999 b8b8b8 d4d4d4 ececec ffffff ffffff ffffff ffffff
   780000 e00000 808000 ffff20 00a000 00ff00 009080 20ffff 000090 0000e0 700080 ff00ff
   200000 400000 700000 900000 c00000 d80000 ff0020 ff4060 ff7088 ffa8b4 ffd8e0
   180000 400010 700818 901828 c01838 d04860 e07888 f0b0c0 ffdce8
   140c10 383034 605058 886070 a08890 c8b8c0 f0e8ec
   200800 501400 802000 b03000 d84000 ff5800 ff7020 ff9850 ffb880 ffd0b0 fff4e0
   200800 481c0c 803810 a04c20 d06028 e08858 f0a880 ffd0b0 fff0e4
   100808 383030 584c48 8c7464 b09c94 ccc0b8 f0ece8 281400`,
  `483c00 806800 a88c00 d8b400 ffe000 ffe420 ffe850 fff070 fff890 ffffd0
   181000 3c3808 686418 988c28 c8b840 dcc860 e8e088 f0e0b8 ffffe8
   141414 3c3c38 646450 8c8c74 a8a898 ccccc0 f0f4e8
   182000 384c00 609000 90c000 b0f000 e0ff00 e0ff20 e4ff50 e8ff78 f0ffa0 f8ffd0
   182000 384c00 608018 88b020 b0e030 c8f060 d8f888 e8f8b8 f8ffe0
   141c14 383c30 606850 8c9878 a8b498 ccd8c0 f0f4ec
   002000 186000 289000 40c000 50f800 60ff00 80ff40 a0ff70 b8ff90 d0ffb0 e8ffd8
   002000 1c5010 388018 48a01c 80f020 90f850 a8ff80 c8ffa8 f0ffe0
   0c1808 303c30 586c50 88a078 a0b898 c4d4bc ecf4ec 003800`
];

const swatches = document.getElementById('swatches');
for (const row of PALETTE) {
  for (const hex of row.trim().split(/\s+/)) {
    const cell = document.createElement('button');
    cell.style.background = '#' + hex;
    cell.setAttribute('aria-label', '#' + hex);
    swatches.append(cell);
  }
}
```
